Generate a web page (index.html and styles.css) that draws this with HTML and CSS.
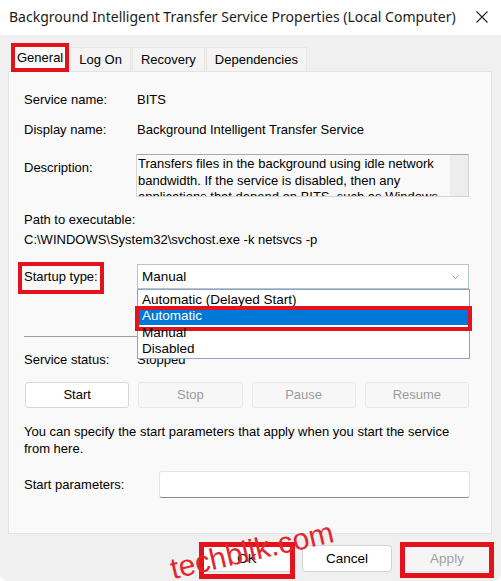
FILE: index.html
```html
<!DOCTYPE html>
<html>
<head>
<meta charset="utf-8">
<link rel="stylesheet" href="styles.css">
</head>
<body>
<div class="window">
  <div class="titlebar">
    <span class="title">Background Intelligent Transfer Service Properties (Local Computer)</span>
    <svg class="close" width="12" height="12" viewBox="0 0 12 12"><path d="M0.5 0.5 L11.5 11.5 M11.5 0.5 L0.5 11.5" stroke="#222" stroke-width="1.1" fill="none"/></svg>
  </div>
  <div class="main">
    <div class="tabs">
      <div class="tab active">General<span class="mark mark-tab"></span></div>
      <div class="tab">Log On</div>
      <div class="tab">Recovery</div>
      <div class="tab">Dependencies</div>
    </div>
    <div class="panel">
      <div class="row r-first"><span class="label">Service name:</span><span>BITS</span></div>
      <div class="row r-next"><span class="label">Display name:</span><span>Background Intelligent Transfer Service</span></div>
      <div class="desc-row">
        <span class="label desc-label">Description:</span>
        <div class="desc">
          <div class="desc-text">Transfers files in the background using idle network bandwidth. If the service is disabled, then any applications that depend on BITS, such as Windows Update or MSN Explorer, will be unable to automatically download programs and other information.</div>
          <div class="scroll"></div>
        </div>
      </div>
      <div class="path">
        <div>Path to executable:</div>
        <div>C:\WINDOWS\System32\svchost.exe -k netsvcs -p</div>
      </div>
      <div class="startup-row">
        <span class="label"><span class="marked">Startup type:<span class="mark mark-startup"></span></span></span>
        <div class="combo">
          <span>Manual</span>
          <svg class="chev" width="7" height="4" viewBox="0 0 7 4"><path d="M0.5 0.5 L3.5 3.5 L6.5 0.5" stroke="#9a9a9a" stroke-width="1" fill="none"/></svg>
          <ul class="dropdown">
            <li>Automatic (Delayed Start)</li>
            <li class="selected">Automatic<span class="mark mark-item"></span></li>
            <li>Manual</li>
            <li>Disabled</li>
          </ul>
        </div>
      </div>
      <div class="sep"></div>
      <div class="row r-status"><span class="label">Service status:</span><span>Stopped</span></div>
      <div class="svc-buttons">
        <div class="btn">Start</div>
        <div class="btn disabled">Stop</div>
        <div class="btn disabled">Pause</div>
        <div class="btn disabled">Resume</div>
      </div>
      <p class="hint">You can specify the start parameters that apply when you start the service from here.</p>
      <div class="params-row">
        <span class="params-label">Start parameters:</span>
        <div class="input"></div>
      </div>
    </div>
    <div class="footer">
      <div class="fbtn">OK<span class="mark mark-ok"></span></div>
      <div class="fbtn">Cancel</div>
      <div class="fbtn disabled">Apply<span class="mark mark-apply"></span></div>
      <span class="watermark">techblik.com</span>
    </div>
  </div>
</div>
</body>
</html>
```

FILE: styles.css
```css
html { background: #ffffff; }
body {
  margin: 0;
  width: 501px;
  height: 581px;
  overflow: hidden;
  font-family: "Liberation Sans", Arial, sans-serif;
  font-size: 13px;
  color: #000;
}
.window {
  width: 501px;
  height: 581px;
  display: flex;
  flex-direction: column;
}
.titlebar {
  height: 35px;
  flex: none;
  background: #ffffff;
  display: flex;
  align-items: center;
  justify-content: space-between;
  padding: 0 13px 0 9px;
}
.title {
  font-family: "Noto Sans", "Open Sans", sans-serif;
  font-size: 14px;
  color: #1a1a1a;
  position: relative;
  top: -1px;
  white-space: nowrap;
}
.close { flex: none; position: relative; top: -1px; }
.main {
  flex: 1;
  background: #f0f0f0;
  padding: 0 9px 0 8px;
  border-radius: 0 0 8px 8px;
}
.tabs {
  display: flex;
  align-items: flex-end;
  height: 36px;
  padding-left: 4px;
  gap: 1px;
  position: relative;
  z-index: 1;
}
.tab {
  height: 24px;
  line-height: 24px;
  padding: 0 8px;
  background: #f4f4f4;
  border: 1px solid #e6e6e6;
  border-bottom: none;
  box-sizing: border-box;
  position: relative;
}
.tab.active {
  height: 28px;
  line-height: 26px;
  padding: 0 4px;
  background: #f9f9f9;
  margin-bottom: -1px;
  margin-right: 1px;
  border-color: #e0e0e0;
}
.mark {
  position: absolute;
  border: 4px solid #e3131e;
  pointer-events: none;
}
.mark-tab { left: -2px; right: -2px; top: -2px; bottom: 0px; }
.panel {
  background: #f9f9f9;
  border: 1px solid #e3e3e3;
  height: 463px;
  box-sizing: border-box;
  padding: 17px 22px 0 15px;
}
.row {
  display: flex;
  align-items: center;
  height: 20px;
}
.r-next { margin-top: 10px; }
.label {
  width: 113px;
  flex: none;
}
.desc-row {
  display: flex;
  margin-top: 15px;
}
.desc-label {
  width: 112px;
  line-height: 20px;
  padding-top: 4px;
}
.desc {
  width: 333px;
  height: 43px;
  box-sizing: border-box;
  border: 1px solid #d4d4d4;
  border-top-color: #a9a9a9;
  display: flex;
  overflow: hidden;
}
.desc-text {
  flex: 1;
  padding: 1px 2px 0 1px;
  line-height: 16.5px;
  font-size: 13px;
}
.scroll {
  width: 18px;
  flex: none;
  background: #ededed;
}
.path {
  margin-top: 13px;
  line-height: 20px;
}
.startup-row {
  display: flex;
  align-items: center;
  margin-top: 14px;
  position: relative;
  z-index: 2;
}
.marked {
  position: relative;
  display: inline-block;
  line-height: 20px;
}
.mark-startup { left: -6px; right: -6px; top: -5px; bottom: -7px; }
.combo {
  position: relative;
  flex: 1;
  height: 25px;
  box-sizing: border-box;
  background: #ffffff;
  border: 1px solid #b5c4d4;
  display: flex;
  align-items: center;
  justify-content: space-between;
  padding: 0 9px 0 4px;
  font-size: 13.5px;
}
.chev { position: relative; top: 0px; }
.dropdown {
  position: absolute;
  left: -1px;
  right: -2px;
  top: 24px;
  margin: 0;
  padding: 1.5px 0 0 0;
  list-style: none;
  background: #ffffff;
  border: 1px solid #8aa6c4;
}
.dropdown li {
  height: 16.5px;
  line-height: 16.5px;
  padding-left: 4px;
  position: relative;
  white-space: nowrap;
}
.dropdown li.selected {
  background: #0078d7;
  color: #ffffff;
}
.mark-item { left: -3px; right: -3px; top: -2px; bottom: -6px; }
.sep {
  margin-top: 47px;
  height: 1px;
  background: #a0a0a0;
}
.r-status { margin-top: 12px; }
.svc-buttons {
  margin-top: 13px;
  display: grid;
  grid-template-columns: repeat(4, 1fr);
  column-gap: 9px;
  padding-left: 1px;
}
.btn {
  height: 26px;
  line-height: 24px;
  box-sizing: border-box;
  text-align: center;
  background: #ffffff;
  border: 1px solid #d6d6d6;
  border-radius: 3px;
}
.btn.disabled {
  background: #f7f7f7;
  border-color: #e8e8e8;
  color: #9c9c9c;
}
.hint {
  margin: 15px 0 0 0;
  line-height: 17px;
}
.params-row {
  display: flex;
  align-items: center;
  margin-top: 14px;
}
.params-label {
  width: 135px;
  flex: none;
}
.input {
  flex: 1;
  margin-right: -1px;
  height: 27px;
  box-sizing: border-box;
  background: #ffffff;
  border: 1px solid #e2e2e2;
  border-bottom-color: #8a8a8a;
  border-radius: 3px;
}
.footer {
  position: relative;
  display: flex;
  justify-content: flex-end;
  gap: 10px;
  padding-top: 11px;
}
.fbtn {
  position: relative;
  width: 90px;
  height: 27px;
  line-height: 25px;
  box-sizing: border-box;
  text-align: center;
  background: #ffffff;
  border: 1px solid #d3d3d3;
  border-radius: 4px;
  font-size: 13.5px;
}
.fbtn.disabled {
  background: #f5f5f5;
  border-color: #e6e6e6;
  color: #a0a0a0;
}
.mark-ok { left: -4px; right: -4px; top: -4px; bottom: -8px; border-width: 5px; }
.mark-apply { left: -3px; right: -3px; top: -4px; bottom: -7px; border-width: 5px; }
.watermark {
  position: absolute;
  left: 166px;
  top: 20px;
  font-family: "Liberation Sans", Arial, sans-serif;
  font-size: 30px;
  color: #e3262d;
  transform: rotate(-13deg);
  transform-origin: left bottom;
  white-space: nowrap;
  line-height: 30px;
  pointer-events: none;
}
```
